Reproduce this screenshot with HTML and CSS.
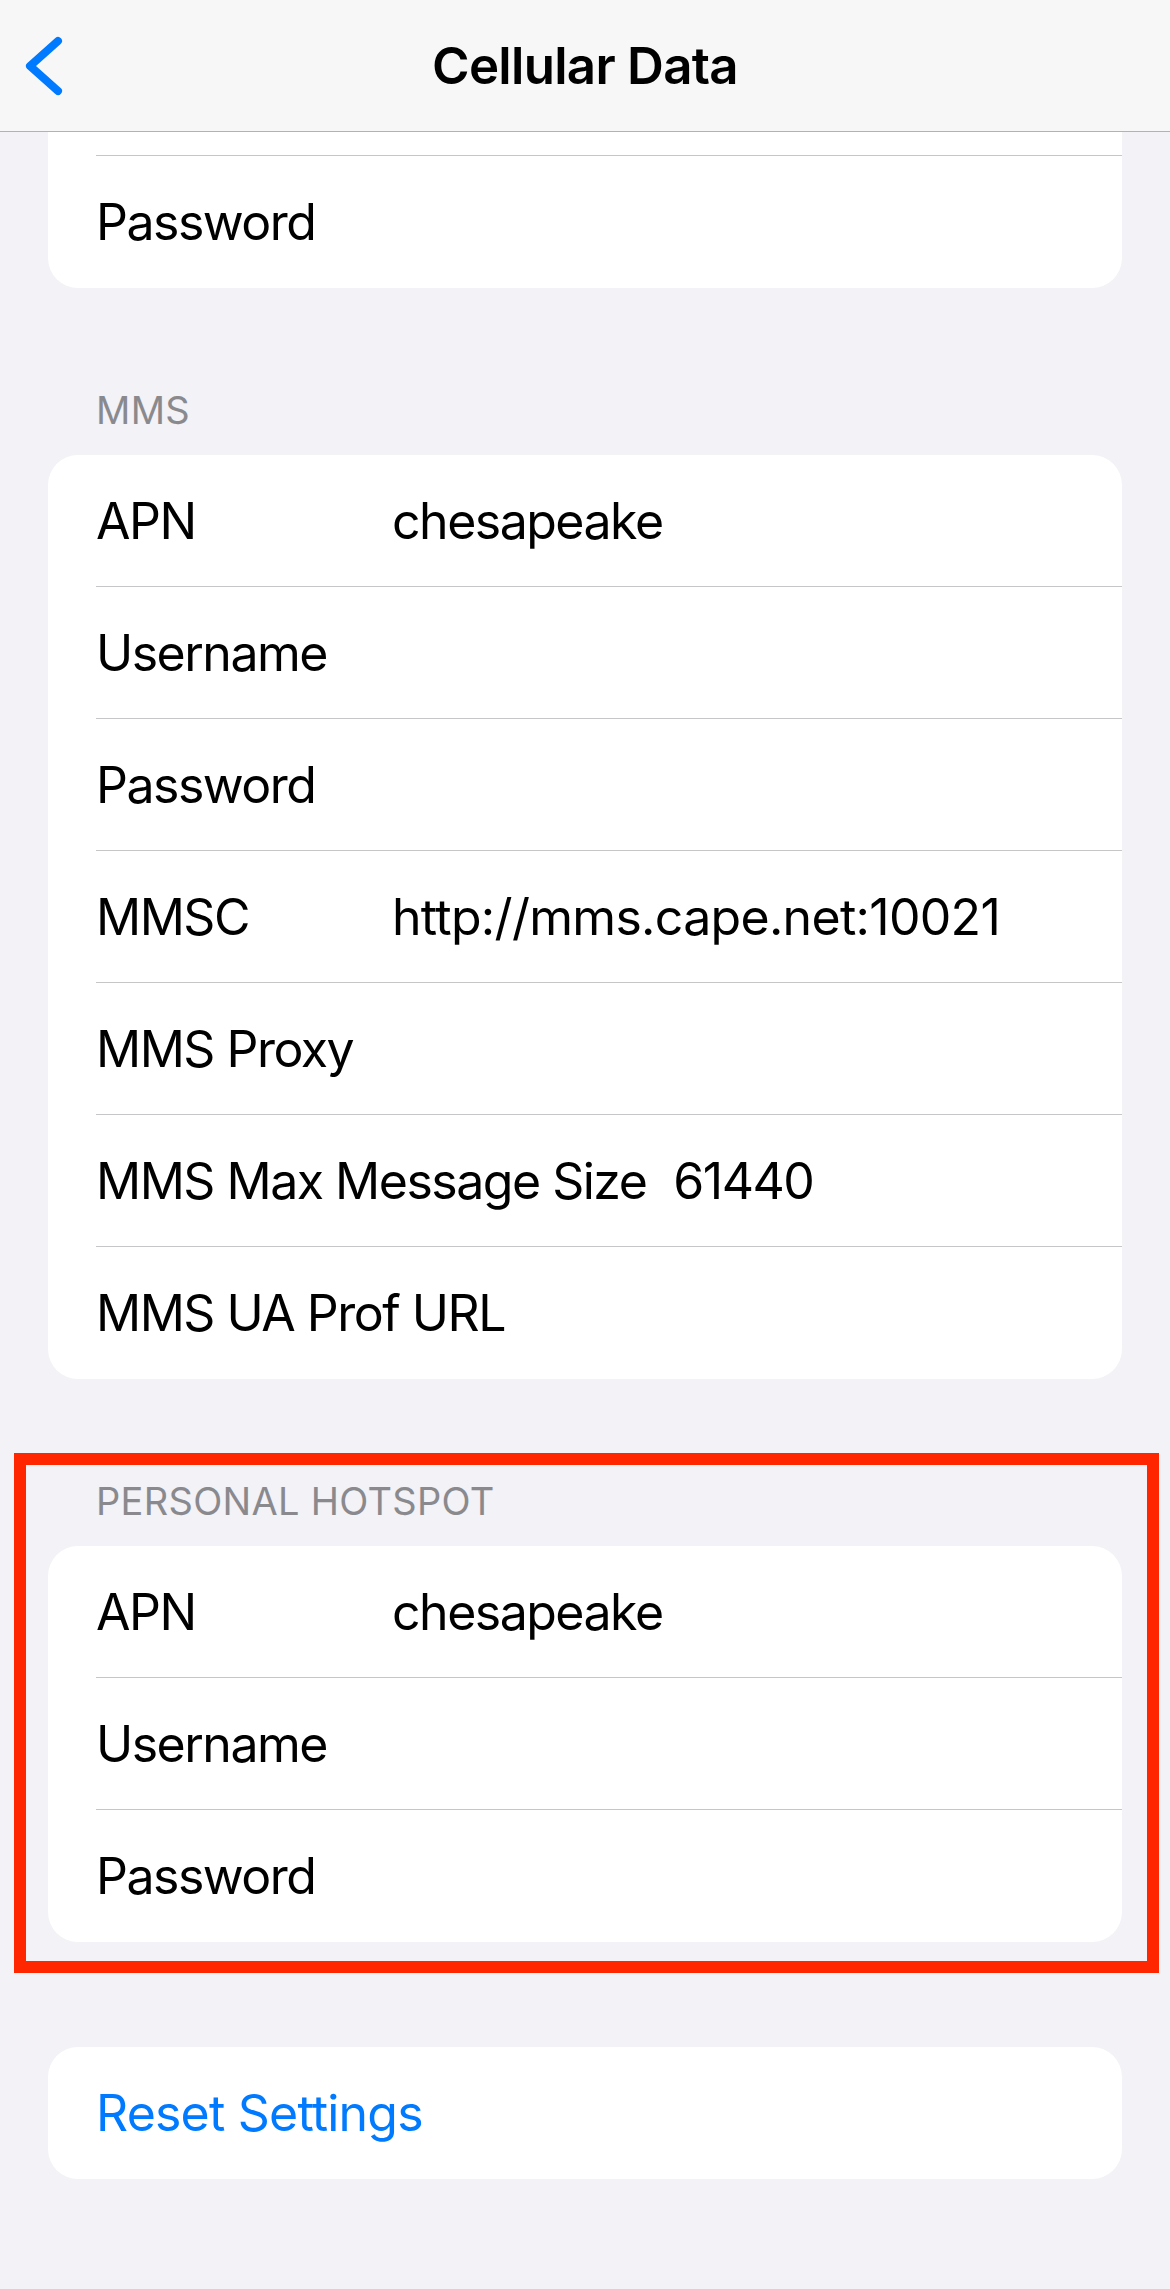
FILE: index.html
```html
<!DOCTYPE html>
<html lang="en">
<head>
<meta charset="utf-8">
<title>Cellular Data</title>
<link rel="stylesheet" href="styles.css">
</head>
<body>
<header class="nav">
  <div class="nav-left">
    <svg class="back" width="44" height="66" viewBox="0 0 44 66" aria-hidden="true">
      <polyline points="36,8 8,33 36,58" fill="none" stroke="#007aff" stroke-width="8" stroke-linecap="round" stroke-linejoin="round"/>
    </svg>
  </div>
  <h1 class="nav-title">Cellular Data</h1>
  <div class="nav-right"></div>
</header>

<main class="content">
  <div class="card card-cut">
    <div class="row"><div class="row-inner row-stub"></div></div>
    <div class="row"><div class="row-inner last"><span class="label">Password</span></div></div>
  </div>

  <section class="group">
    <h2 class="group-header">MMS</h2>
    <div class="card">
      <div class="row"><div class="row-inner"><span class="label">APN</span><span class="value">chesapeake</span></div></div>
      <div class="row"><div class="row-inner"><span class="label">Username</span></div></div>
      <div class="row"><div class="row-inner"><span class="label">Password</span></div></div>
      <div class="row"><div class="row-inner"><span class="label">MMSC</span><span class="value url">http://mms.cape.net:10021</span></div></div>
      <div class="row"><div class="row-inner"><span class="label">MMS Proxy</span></div></div>
      <div class="row"><div class="row-inner"><span class="label">MMS Max Message Size</span><span class="value">61440</span></div></div>
      <div class="row"><div class="row-inner last"><span class="label">MMS UA Prof URL</span></div></div>
    </div>
  </section>

  <section class="group highlight">
    <h2 class="group-header">Personal Hotspot</h2>
    <div class="card">
      <div class="row"><div class="row-inner"><span class="label">APN</span><span class="value">chesapeake</span></div></div>
      <div class="row"><div class="row-inner"><span class="label">Username</span></div></div>
      <div class="row"><div class="row-inner last"><span class="label">Password</span></div></div>
    </div>
  </section>

  <div class="card card-reset">
    <div class="row"><div class="row-inner last"><span class="link">Reset Settings</span></div></div>
  </div>
</main>
</body>
</html>
```

FILE: styles.css
```css
html, body {
  margin: 0;
  padding: 0;
}

body {
  background: #f2f2f7;
  font-family: Inter, "Noto Sans", "Liberation Sans", sans-serif;
  color: #000;
  min-height: 2289px;
}

.nav {
  height: 131px;
  border-bottom: 1px solid #b2b2b2;
  background: #f7f7f7;
  display: grid;
  grid-template-columns: 1fr auto 1fr;
  align-items: center;
}

.nav-left {
  display: flex;
  align-items: center;
  padding-left: 22px;
}

.back {
  display: block;
}

.nav-title {
  margin: 0;
  font-size: 51px;
  font-weight: 600;
  line-height: 62px;
  letter-spacing: -0.7px;
}

.content {
  padding: 0 48px;
}

.card {
  background: #fff;
  border-radius: 30px;
  overflow: hidden;
}

.card-cut {
  border-radius: 0 0 30px 30px;
}

.row {
  padding-left: 48px;
}

.row-inner {
  box-sizing: border-box;
  height: 132px;
  padding-top: 0;
  border-bottom: 1px solid #c6c6c8;
  display: flex;
  align-items: center;
  font-size: 50px;
  line-height: 62px;
  letter-spacing: -1.5px;
}

.row-inner.last {
  border-bottom: none;
}

.row-inner.row-stub {
  height: 24px;
}

.label {
  flex: 0 0 auto;
  min-width: 269px;
  margin-right: 27px;
}

.value {
  flex: 1 1 auto;
  white-space: nowrap;
}

.value.url {
  letter-spacing: -0.7px;
}

.link {
  color: #007aff;
  letter-spacing: -0.8px;
}

.group-header {
  margin: 0;
  padding: 99px 48px 22px;
  font-size: 38px;
  line-height: 46px;
  font-weight: 400;
  color: #8a8a8e;
  text-transform: uppercase;
  letter-spacing: 0.3px;
}

.highlight {
  position: relative;
}

.highlight::after {
  content: "";
  position: absolute;
  top: 74px;
  left: -34px;
  right: -37px;
  bottom: -31px;
  border: 12px solid #ff2600;
  pointer-events: none;
}

.card-reset {
  margin-top: 105px;
}
```
